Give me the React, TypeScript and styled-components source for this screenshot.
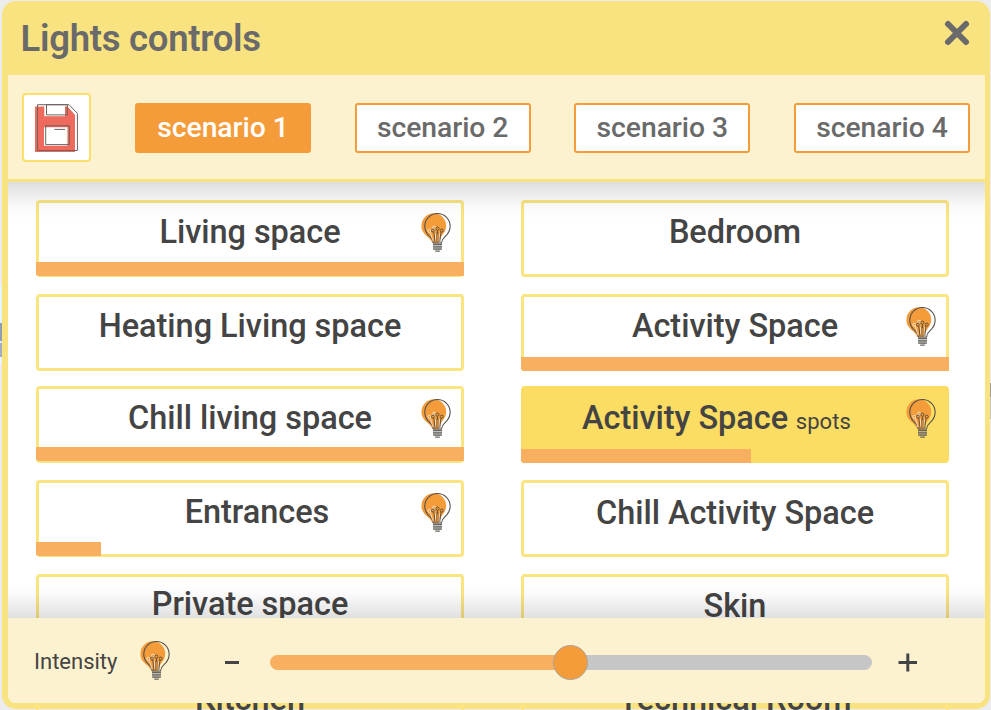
import React from 'react';
import styled, { createGlobalStyle, css } from 'styled-components';

const GlobalStyle = createGlobalStyle`
  *, *::before, *::after { box-sizing: border-box; }
  body { margin: 0; background: #ececec; font-family: Roboto, 'Liberation Sans', sans-serif; }
  button { font-family: inherit; cursor: pointer; }
`;

const Backdrop = styled.main`
  width: 991px;
  height: 710px;
  overflow: hidden;
  padding: 1px 1px 1px 2px;
  background:
    linear-gradient(#e2f6fb 0 37px, #8f9fb2 37px 55px, #e2f0f5 55px 57px, #a0aec0 57px 71px, #e6f6fa 71px 78px) 0 286px / 2px 78px no-repeat,
    linear-gradient(#9b9da0 0 14px, #c2c8ca 14px 36px) 990px 383px / 1px 36px no-repeat,
    #ececec;
`;

const Dialog = styled.section`
  display: grid;
  grid-template-rows: 74px 107px 521px;
  grid-template-columns: 1fr;
  height: 708px;
  border-radius: 14px;
  padding: 0 5px 6px 6px;
  background: #f8e380;
`;

const Header = styled.header`
  display: flex;
  justify-content: space-between;
  align-items: flex-start;
  padding: 16px 14px 0 12.5px;
`;

const Title = styled.h1`
  margin: 0;
  font-size: 36.5px;
  line-height: 43px;
  font-weight: 600;
  letter-spacing: -.27px;
  color: #6a6a6a;
`;

const CloseButton = styled.button`
  display: flex;
  margin-top: 2px;
  padding: 0;
  border: 0;
  background: none;
`;

const Toolbar = styled.nav`
  display: flex;
  align-items: flex-start;
  padding: 18px 15px 0 14px;
  border-bottom: 3px solid #f8e380;
  background: #fdf2cf;
`;

const SaveButton = styled.button`
  display: flex;
  width: 69px;
  height: 69px;
  margin-right: 44px;
  padding: 9px 0 0 11px;
  border: 2px solid #fadf6b;
  border-radius: 4px;
  background: #fff;
`;

const ScenarioList = styled.div`
  display: flex;
  flex: 1;
  justify-content: space-between;
  padding-top: 10px;
`;

const Scenario = styled.button<{ $active?: boolean }>`
  width: 176px;
  height: 50px;
  padding: 0 0 2px;
  border: 2px solid #f59c3a;
  border-radius: 3px;
  background: ${p => (p.$active ? '#f59c3a' : '#fff')};
  color: ${p => (p.$active ? '#fff' : '#6a6a6a')};
  font-size: 28.3px;
  font-weight: 490;
  letter-spacing: -.05px;
`;

const Body = styled.div`
  grid-area: 3 / 1;
  position: relative;
  background: #fff;
  border-radius: 0 0 8px 8px;

  &::after {
    content: '';
    position: absolute;
    inset: 0 0 85px;
    background:
      linear-gradient(rgba(0, 0, 0, .13), rgba(0, 0, 0, .08) 12px, rgba(0, 0, 0, .025) 24px, transparent 38px),
      linear-gradient(to top, rgba(0, 0, 0, .12), rgba(0, 0, 0, .07) 12px, rgba(0, 0, 0, .02) 24px, transparent 36px);
  }
`;

const Rooms = styled.div`
  display: grid;
  grid-template-columns: 428px 428px;
  grid-template-rows: 94px 92px repeat(4, 94px);
  column-gap: 57px;
  height: 528px;
  padding: 18px 0 0 28px;
  overflow: hidden;
`;

const selectedCard = css`
  background: #fadd62;
  border-color: #fadd62;
`;

const RoomCard = styled.button<{ $selected?: boolean; $shift?: number; $nudge?: number }>`
  display: grid;
  position: relative;
  align-content: start;
  justify-content: center;
  height: 77px;
  padding: ${p => 10 + (p.$shift ?? 0)}px 0 0;
  border: 3px solid #fae580;
  border-radius: 4px;
  background: transparent;
  text-indent: ${p => p.$nudge ?? 0}px;
  ${p => p.$selected && selectedCard}
`;

const RoomName = styled.span`
  font-size: 32.5px;
  line-height: 38px;
  font-weight: 490;
  letter-spacing: -.04px;
  color: #444;
  white-space: nowrap;
`;

const RoomNote = styled.small`
  margin: 0 37px 0 2px;
  font-size: 22px;
  font-weight: 400;
  letter-spacing: .1px;
`;

const CardBulb = styled.span`
  position: absolute;
  top: 9px;
  right: 8px;
  display: flex;
`;

const Level = styled.span<{ $lift?: number }>`
  position: absolute;
  left: -3px;
  bottom: ${p => (p.$lift ?? 0) - 3}px;
  height: 14px;
  border-radius: 0 0 0 3px;
  background: #f8af60;
`;

const Footer = styled.footer`
  grid-area: 3 / 1;
  align-self: end;
  z-index: 1;
  display: flex;
  align-items: center;
  height: 85px;
  padding: 0 67px 0 26px;
  border-radius: 0 0 8px 8px;
  background: #fdf2cf;
  color: #444;
`;

const IntensityLabel = styled.label`
  width: 106px;
  padding-top: 1px;
  font-size: 22px;
`;

const StepButton = styled.button`
  display: flex;
  padding: 2px 0 0;
  border: 0;
  background: none;
`;

const Slider = styled.div`
  flex: 1;
  display: flex;
  align-items: center;
  height: 36px;
  margin: 4px 26px 0 31px;
`;

const SliderFill = styled.span`
  height: 15px;
  border-radius: 8px 0 0 8px;
  background: #f8af60;
`;

const SliderRest = styled.span`
  flex: 1;
  height: 15px;
  border-radius: 0 8px 8px 0;
  background: #c6c6c6;
`;

const Thumb = styled.span`
  flex: none;
  width: 35px;
  height: 35px;
  margin: 0 -17.5px;
  z-index: 1;
  border: 1px solid #aaa49c;
  border-radius: 50%;
  background: #f59c3a;
`;

const Bulb = () => (
  <svg width="32" height="41" viewBox="0 0 32 41" fill="none">
    <path d="M11.3 31C10.3 28 8.5 26.7 6.5 24.8 3 21.8.4 18.8.4 13.7A12.4 12.4 0 0 1 25.2 13.7c0 5-3 8-5 11-1.400 2-2 4-2.500 6.300Z" fill="#f59c3a" />
    <path d="M12.4 31c-.5-4.500-2.900-5.900-5.300-8.200a12.700 12.700 0 1 1 18.700 0c-2.400 2.300-4.800 3.700-5.300 8.200Z" stroke="#55504a" strokeWidth="1.1" />
    <g stroke="#fff" strokeWidth=".9" opacity=".75">
      <circle cx="8.3" cy="18.8" r="1.5" /><circle cx="13" cy="15.7" r="1.5" />
      <path d="m9.3 20.3 2.7 9M13.3 17.200l.5 3M14.600 21v8M18.300 21l-.5 8" />
    </g>
    <g stroke="#594834" strokeWidth=".9">
      <circle cx="12" cy="18.600" r="1.500" /><circle cx="16.400" cy="16.600" r="1.600" /><circle cx="20.800" cy="18.600" r="1.500" />
      <path d="M12.800 20 14 30M16.400 18.200V22M20 20 18.800 30" />
      <path d="M15.700 20.500V30M17.200 20.500V30" opacity=".6" />
    </g>
    <path d="M12 31.500h9v6.200h-9z" fill="#777" opacity=".45" />
    <path d="M12 32.300h9M12 34.800h9M12.300 37.200h8.400M14.200 39.100h4.600" stroke="#68645f" strokeWidth="1.300" />
  </svg>
);

const Floppy = () => (
  <svg width="44" height="50" viewBox="0 0 44 50" fill="none">
    <path d="M0 2.500h9.300v9.800H30V2.500h2.500L40 11v37H0ZM9 23.300v18.500h23.500V23.300Z" fill="#ed6a5c" fillRule="evenodd" />
    <g stroke="#6c6260" strokeWidth="1">
      <path d="M2.500.700H34L42.400 9.300V46.500H2.500Z" />
      <path d="M11.500.700H32.300V10.900H11.500ZM10.700 21.800H34.300V40.600H10.700ZM19.300 25.400H30" />
    </g>
  </svg>
);

type Room = {
  name: string;
  note?: string;
  level?: number;
  lift?: number;
  selected?: boolean;
  shift?: number;
  nudge?: number;
};

const rooms: Room[] = [
  { name: 'Living space', level: 428, lift: 1 },
  { name: 'Bedroom', shift: -0.5 },
  { name: 'Heating Living space' },
  { name: 'Activity Space', level: 428 },
  { name: 'Chill living space', level: 428, lift: 2 },
  { name: 'Activity Space', note: 'spots', level: 230, selected: true },
  { name: 'Entrances', level: 65, lift: 1, nudge: 14, shift: -0.5 },
  { name: 'Chill Activity Space', shift: 1 },
  { name: 'Private space', shift: -2 },
  { name: 'Skin' },
  { name: 'Kitchen', shift: -1 },
  { name: 'Technical Room', shift: -1 },
];

export default function App() {
  const scenarios = [1, 2, 3, 4];
  return (
    <>
      <GlobalStyle />
      <Backdrop>
        <Dialog>
          <Header>
            <Title>Lights controls</Title>
            <CloseButton aria-label="Close">
              <svg width="28" height="28" viewBox="0 0 28 28">
                <path d="m5 5 18 18M23 5 5 23" stroke="#6a6a6a" strokeWidth="6" strokeLinecap="round" />
              </svg>
            </CloseButton>
          </Header>
          <Toolbar>
            <SaveButton aria-label="Save"><Floppy /></SaveButton>
            <ScenarioList>
              {scenarios.map(n => <Scenario key={n} $active={n === 1}>scenario {n}</Scenario>)}
            </ScenarioList>
          </Toolbar>
          <Body>
            <Rooms>
              {rooms.map((r, i) => (
                <RoomCard key={i} $selected={r.selected} $shift={r.shift} $nudge={r.nudge}>
                  <RoomName>{r.name}{r.note && <RoomNote> {r.note}</RoomNote>}</RoomName>
                  {r.level && <CardBulb><Bulb /></CardBulb>}
                  {r.level && <Level $lift={r.lift} style={{ width: r.level }} />}
                </RoomCard>
              ))}
            </Rooms>
          </Body>
          <Footer>
            <IntensityLabel>Intensity</IntensityLabel>
            <Bulb />
            <StepButton aria-label="Decrease">
              <svg width="67" height="20" viewBox="0 0 67 20"><path d="M53 10.500h14" stroke="#444" strokeWidth="3" /></svg>
            </StepButton>
            <Slider>
              <SliderFill style={{ width: 300.5 }} />
              <Thumb />
              <SliderRest />
            </Slider>
            <StepButton aria-label="Increase">
              <svg width="20" height="20" viewBox="0 0 20 20"><path d="M.500 10.500h18.500M9.800 1.500v18" stroke="#444" strokeWidth="3" /></svg>
            </StepButton>
          </Footer>
        </Dialog>
      </Backdrop>
    </>
  );
}
